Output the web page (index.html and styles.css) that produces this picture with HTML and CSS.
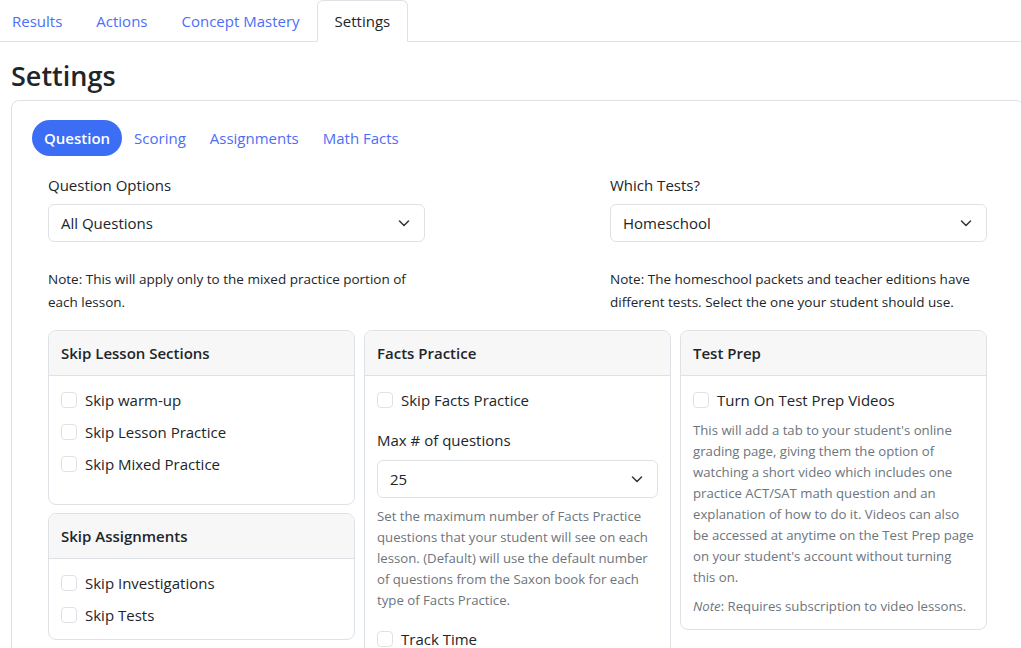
FILE: index.html
```html
<!DOCTYPE html>
<html>
<head>
<meta charset="utf-8">
<link rel="stylesheet" href="styles.css">
</head>
<body>
<nav class="tabs">
  <a class="tab">Results</a>
  <a class="tab">Actions</a>
  <a class="tab">Concept Mastery</a>
  <a class="tab active">Settings</a>
</nav>
<main class="page">
  <h1 class="title">Settings</h1>
  <section class="panel">
    <div class="pills">
      <a class="pill active">Question</a>
      <a class="pill">Scoring</a>
      <a class="pill">Assignments</a>
      <a class="pill">Math Facts</a>
    </div>
    <div class="content">
      <div class="options">
        <div class="field">
          <div class="label">Question Options</div>
          <div class="select"><span>All Questions</span><svg class="chev" viewBox="0 0 16 16"><path d="M3.5 6l4.5 4.5L12.5 6"/></svg></div>
          <p class="note">Note: This will apply only to the mixed practice portion of each lesson.</p>
        </div>
        <div class="field">
          <div class="label">Which Tests?</div>
          <div class="select"><span>Homeschool</span><svg class="chev" viewBox="0 0 16 16"><path d="M3.5 6l4.5 4.5L12.5 6"/></svg></div>
          <p class="note">Note: The homeschool packets and teacher editions have different tests. Select the one your student should use.</p>
        </div>
      </div>
      <div class="cards">
        <div class="stack">
          <div class="card">
            <div class="card-head">Skip Lesson Sections</div>
            <div class="card-body pad-bottom">
              <label class="check"><span class="box"></span>Skip warm-up</label>
              <label class="check"><span class="box"></span>Skip Lesson Practice</label>
              <label class="check"><span class="box"></span>Skip Mixed Practice</label>
            </div>
          </div>
          <div class="card">
            <div class="card-head">Skip Assignments</div>
            <div class="card-body">
              <label class="check"><span class="box"></span>Skip Investigations</label>
              <label class="check"><span class="box"></span>Skip Tests</label>
            </div>
          </div>
        </div>
        <div class="card tall">
          <div class="card-head">Facts Practice</div>
          <div class="card-body">
            <label class="check"><span class="box"></span>Skip Facts Practice</label>
            <div class="label mt">Max # of questions</div>
            <div class="select narrow"><span>25</span><svg class="chev" viewBox="0 0 16 16"><path d="M3.5 6l4.5 4.5L12.5 6"/></svg></div>
            <p class="help">Set the maximum number of Facts Practice questions that your student will see on each lesson. (Default) will use the default number of questions from the Saxon book for each type of Facts Practice.</p>
            <label class="check mt"><span class="box"></span>Track Time</label>
          </div>
        </div>
        <div class="card">
          <div class="card-head">Test Prep</div>
          <div class="card-body">
            <label class="check"><span class="box"></span>Turn On Test Prep Videos</label>
            <p class="help">This will add a tab to your student's online grading page, giving them the option of watching a short video which includes one practice ACT/SAT math question and an explanation of how to do it. Videos can also be accessed at anytime on the Test Prep page on your student's account without turning this on.</p>
            <p class="help"><em>Note</em>: Requires subscription to video lessons.</p>
          </div>
        </div>
      </div>
    </div>
  </section>
</main>
</body>
</html>
```
FILE: styles.css
```css
html, body {
  margin: 0;
  overflow: hidden;
}
body {
  font-family: "Open Sans", "Noto Sans", sans-serif;
  font-size: 15px;
  line-height: 24px;
  color: #212529;
  background: #fff;
}
.tabs {
  display: flex;
  border-bottom: 1px solid #dee2e6;
  margin-left: -5px;
  height: 41px;
}
.tab {
  display: block;
  padding: 8px 16px;
  border: 1px solid transparent;
  border-top-left-radius: 6px;
  border-top-right-radius: 6px;
  color: #4d6ef6;
  margin-bottom: -1px;
  height: 24px;
}
.tab.active {
  color: #212529;
  border-color: #dee2e6 #dee2e6 #fff;
  background: #fff;
  padding: 8px 17px;
}
.page {
  padding-left: 11px;
}
.title {
  margin: 17px 0 7px;
  font-size: 27px;
  line-height: 34px;
  font-weight: 600;
}
.panel {
  width: 1013px;
  box-sizing: border-box;
  border: 1px solid #dee2e6;
  border-radius: 8px;
  padding: 19px 20px 20px;
}
.pills {
  display: flex;
}
.pill {
  display: block;
  padding: 6px 12px;
  border-radius: 18px;
  color: #4d6ef6;
}
.pill.active {
  background: #3b6df5;
  color: #fff;
  font-weight: 600;
}
.content {
  padding: 0 16px;
  margin-top: 17px;
}
.options {
  display: flex;
  justify-content: space-between;
}
.field {
  width: 377px;
}
.label {
  margin-bottom: 7px;
}
.select {
  display: flex;
  align-items: center;
  justify-content: space-between;
  height: 38px;
  box-sizing: border-box;
  border: 1px solid #dee2e6;
  border-radius: 6px;
  padding: 0 12px;
}
.chev {
  width: 16px;
  height: 16px;
  fill: none;
  stroke: #343a40;
  stroke-width: 1.6;
  stroke-linecap: round;
  stroke-linejoin: round;
}
.note {
  margin: 26px 0 0;
  font-size: 13.5px;
  line-height: 23px;
}
.cards {
  display: grid;
  grid-template-columns: repeat(3, 1fr);
  gap: 9px;
  margin-top: 16px;
  align-items: start;
}
.stack {
  display: flex;
  flex-direction: column;
  gap: 8px;
}
.card {
  border: 1px solid #dee2e6;
  border-radius: 8px;
  overflow: hidden;
}
.card.tall {
  height: 400px;
}
.card-head {
  background: #f7f7f7;
  border-bottom: 1px solid #dee2e6;
  padding: 10px 12px;
  font-weight: 600;
}
.card-body {
  padding: 12px;
}
.card-body.pad-bottom {
  padding-bottom: 28px;
}
.check {
  display: flex;
  align-items: center;
  gap: 8px;
  margin-bottom: 8px;
}
.check:last-child {
  margin-bottom: 0;
}
.box {
  width: 16px;
  height: 16px;
  box-sizing: border-box;
  border: 1px solid #dee2e6;
  border-radius: 4px;
  background: #fff;
  flex: none;
}
.mt {
  margin-top: 16px;
}
.label.mt {
  margin-bottom: 8px;
}
.help {
  margin: 8px -2px 0 0;
  font-size: 13.2px;
  line-height: 21px;
  color: #6c757d;
}
```
